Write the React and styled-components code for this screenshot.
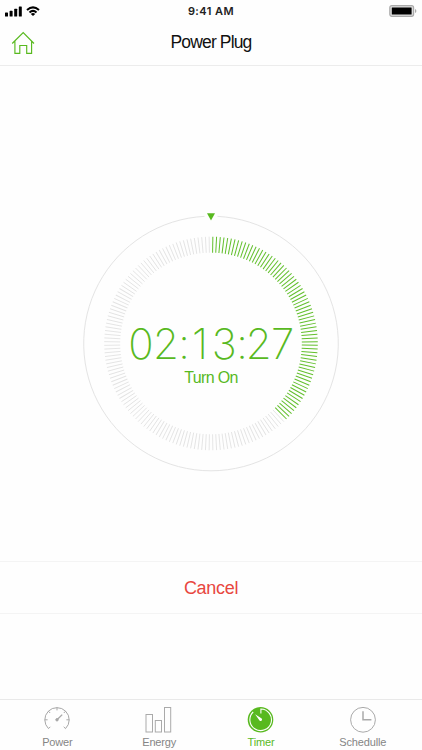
import React from "react";
import styled, { createGlobalStyle } from "styled-components";

const GREEN = "#58b91f";

const GlobalStyle = createGlobalStyle`
  * { box-sizing: border-box; }
  html, body { margin: 0; background: #fefefe; }
  svg { display: block; }
`;

const Screen = styled.div`
  width: 422px;
  height: 750px;
  display: flex;
  flex-direction: column;
  background: #fefefe;
  font-family: "Liberation Sans", Arial, sans-serif;
  overflow: hidden;
`;

const StatusBar = styled.header`
  height: 20px;
  display: grid;
  grid-template-columns: 1fr auto 1fr;
  align-items: center;
  padding: 1px 5px 0;
`;

const StatusGroup = styled.div`
  display: flex;
  align-items: center;
  gap: 4px;
  justify-content: ${(p) => (p.$end ? "flex-end" : "flex-start")};
`;

const Clock = styled.time`
  font: 600 11px/19px Inter, sans-serif;
  letter-spacing: 0.45px;
  padding-top: 1px;
  color: #222;
`;

const NavBar = styled.nav`
  height: 46px;
  display: grid;
  grid-template-columns: 48px 1fr 48px;
  align-items: center;
  border-bottom: 1px solid #ececec;
`;

const HomeButton = styled.button`
  border: 0;
  padding: 0 0 0 11px;
  background: none;
`;

const Title = styled.h1`
  margin: 0;
  font-weight: 400;
  font-size: 17.5px;
  line-height: 45px;
  letter-spacing: -0.85px;
  text-align: center;
  color: #111;
`;

const Main = styled.main`
  height: 495px;
  display: flex;
  justify-content: center;
  padding-top: 145px;
`;

const Dial = styled.section`
  width: 260px;
  height: 265px;
  display: grid;
  > * { grid-area: 1 / 1; }
`;

const Readout = styled.div`
  display: flex;
  flex-direction: column;
  align-items: center;
  padding-top: 107px;
  color: ${GREEN};
`;

const Countdown = styled.div`
  font: 200 42px/52px Inter, sans-serif;
  letter-spacing: -0.6px;
  white-space: nowrap;
`;

const NarrowDigit = styled.span`
  margin: 0 4.5px 0 2.5px;
`;

const Separator = styled.span`
  letter-spacing: -2px;
`;

const Mode = styled.div`
  font-size: 16px;
  line-height: 16px;
  letter-spacing: -0.65px;
`;

const CancelButton = styled.button`
  height: 53px;
  padding: 1px 0 0;
  border: solid #f4f4f4;
  border-width: 1px 0;
  background: none;
  font: 400 18px/51px "Liberation Sans", Arial, sans-serif;
  letter-spacing: -0.3px;
  color: #e8473f;
`;

const TabBar = styled.nav`
  height: 51px;
  margin-top: auto;
  display: grid;
  grid-template-columns: repeat(4, 101.8px);
  padding-left: 6.5px;
  border-top: 1px solid #e9e9e9;
`;

const Tab = styled.button`
  display: flex;
  flex-direction: column;
  align-items: center;
  gap: 2px;
  border: 0;
  padding: 6px 0 0;
  background: none;
  font: 400 11px/15px "Liberation Sans", Arial, sans-serif;
  letter-spacing: -0.15px;
  color: ${(p) => (p.$active ? GREEN : "#858585")};
`;

const SignalIcon = () => (
  <svg width="17" height="11" viewBox="0 0 17 11">
    <rect x="0" y="6.5" width="3" height="4" rx=".6" />
    <rect x="4.6" y="4.8" width="3" height="5.7" rx=".6" />
    <rect x="9.2" y="2.7" width="3" height="7.8" rx=".6" />
    <rect x="13.8" y=".4" width="3" height="10.1" rx=".6" />
  </svg>
);

const WifiIcon = () => (
  <svg width="14" height="11" viewBox="0 0 14 11">
    <g fill="none" stroke="#000" strokeWidth="2">
      <path d="M1 4.1Q7-1.4 13 4.1" />
      <path d="M3.5 6.5Q7 3.3 10.5 6.5" />
    </g>
    <path d="M4.8 7.9Q7 6.1 9.2 7.9L7 10Z" />
  </svg>
);

const BatteryIcon = () => (
  <svg width="28" height="12" viewBox="0 0 28 12">
    <rect x=".8" y=".7" width="23.8" height="10.6" rx="2" fill="#ddd" stroke="#aaa" strokeWidth="1.2" />
    <rect x="2.8" y="2.4" width="19.8" height="7.2" rx=".4" />
    <path d="M26 4.1Q27.4 4.6 27.4 6T26 7.9Z" fill="#aaa" />
  </svg>
);

const HomeIcon = () => (
  <svg width="24" height="24" viewBox="0 0 24 24" fill="none" stroke={GREEN} strokeWidth="1.15">
    <path d="M1.2 12.5L12.2 1.5L23 12.5M3.9 10V22.3H8.8V14.5H15.7V22.3H20.6V10" />
  </svg>
);

const GaugeIcon = () => (
  <svg width="28" height="27" viewBox="0 0 28 27" fill="none" stroke="#a7a7a7" strokeWidth="1">
    <path d="M5.5 22.6A12.2 12.2 0 1 1 22.5 22.6" />
    <path d="M5.5 22.6L7.3 20.8M1.8 13.8H4.6M5.3 5.1L7.2 7M14 1.6V4.4M22.7 5.1L20.8 7M26.2 13.8H23.4M22.5 22.6L20.7 20.8" />
    <path d="M14 13.8L19.2 8.6" strokeWidth="1.3" />
    <circle cx="14" cy="13.8" r="1.2" fill="#a7a7a7" />
  </svg>
);

const BarsIcon = () => (
  <svg width="28" height="27" viewBox="0 0 28 27" fill="none" stroke="#aaa" strokeWidth="1">
    <rect x="1" y="8.5" width="6.5" height="17.5" />
    <rect x="10.3" y="14.5" width="6.2" height="11.5" />
    <rect x="19.5" y="1.5" width="6.2" height="24.5" />
  </svg>
);

const TimerIcon = () => (
  <svg width="28" height="27" viewBox="0 0 28 27">
    <circle cx="13.5" cy="13.8" r="12.8" fill={GREEN} />
    <path d="M13.9 7.6V3A10.8 10.8 0 1 1 6.2 6" fill="none" stroke="#fff" strokeWidth="1.1" />
    <path d="M8.1 8.3L14.7 12.6A1.2 1.2 0 0 1 12.5 14.5Z" fill="#fff" />
  </svg>
);

const ClockIcon = () => (
  <svg width="28" height="27" viewBox="0 0 28 27" fill="none" stroke="#aaa">
    <circle cx="14" cy="13.8" r="12.4" strokeWidth="1" />
    <path d="M14 5.2V13.8H22.4" strokeWidth="1.5" />
  </svg>
);

const TICKS = Array.from({ length: 180 }, (_, i) => i * 2 + 1);
const RING_GAP = 6.5;
const RING_RADIUS = 127.3;

const DialFace = () => {
  const angle = RING_GAP / RING_RADIUS;
  const dx = RING_RADIUS * Math.sin(angle);
  const y = 132.5 - RING_RADIUS * Math.cos(angle);
  return (
    <svg width="260" height="265" viewBox="0 0 260 265">
      <path
        d={`M${130 + dx} ${y}A${RING_RADIUS} ${RING_RADIUS} 0 1 1 ${130 - dx} ${y}`}
        fill="none"
        stroke="#e4e4e4"
      />
      <path d="M126 2.3H134L130 9.5Z" fill={GREEN} />
      {TICKS.map((a) => (
        <line
          key={a}
          x1="130"
          x2="130"
          y1="25.7"
          y2="41.7"
          transform={`rotate(${a} 130 132.5)`}
          stroke={a <= 135 ? "#62bf2c" : "#e3e3e3"}
          strokeWidth={a <= 135 ? 1 : 0.9}
        />
      ))}
    </svg>
  );
};

const TABS = [
  { label: "Power", icon: GaugeIcon },
  { label: "Energy", icon: BarsIcon },
  { label: "Timer", icon: TimerIcon, active: true },
  { label: "Schedulle", icon: ClockIcon },
];

export default function App() {
  return (
    <>
      <GlobalStyle />
      <Screen>
        <StatusBar>
          <StatusGroup>
            <SignalIcon />
            <WifiIcon />
          </StatusGroup>
          <Clock>9:41 AM</Clock>
          <StatusGroup $end>
            <BatteryIcon />
          </StatusGroup>
        </StatusBar>
        <NavBar>
          <HomeButton aria-label="Home">
            <HomeIcon />
          </HomeButton>
          <Title>Power Plug</Title>
        </NavBar>
        <Main>
          <Dial>
            <DialFace />
            <Readout>
              <Countdown>
                02:<NarrowDigit>1</NarrowDigit>3<Separator>:</Separator>27
              </Countdown>
              <Mode>Turn On</Mode>
            </Readout>
          </Dial>
        </Main>
        <CancelButton>Cancel</CancelButton>
        <TabBar>
          {TABS.map(({ label, icon: Icon, active }) => (
            <Tab key={label} $active={active}>
              <Icon />
              {label}
            </Tab>
          ))}
        </TabBar>
      </Screen>
    </>
  );
}
